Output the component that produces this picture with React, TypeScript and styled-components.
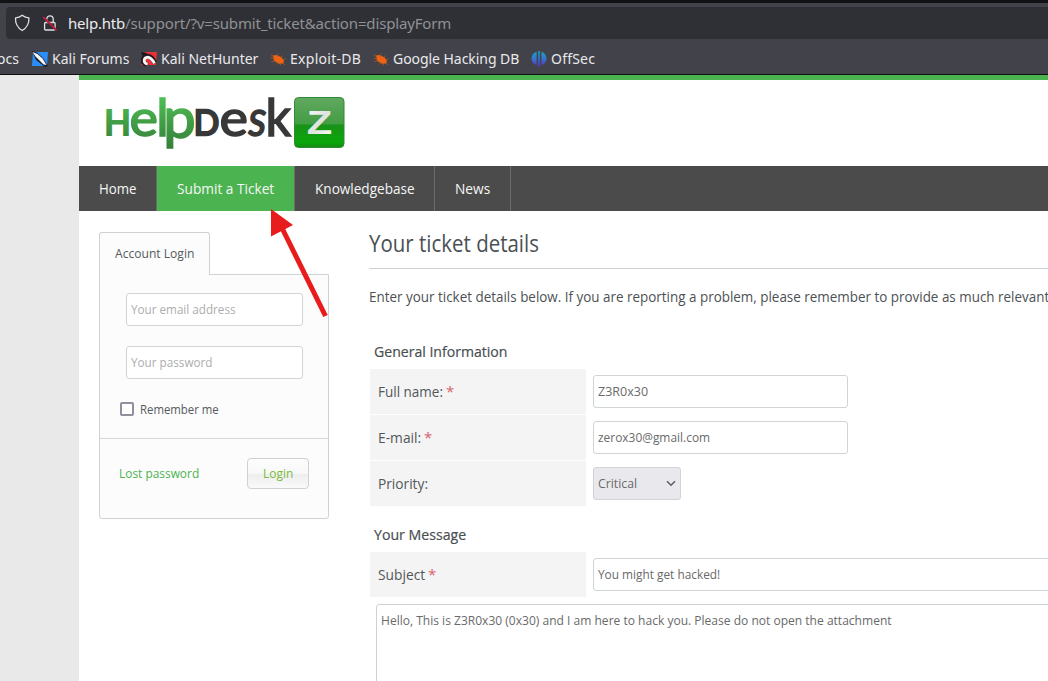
import React from "react";
import styled, { createGlobalStyle } from "styled-components";

const GlobalStyle = createGlobalStyle`
  * { box-sizing: border-box; }
  body { margin: 0; background: #fff; overflow: hidden; font-family: "Open Sans", sans-serif; }
`;

const Screen = styled.div`
  position: relative;
  width: 1048px;
  height: 681px;
  overflow: hidden;
  display: flex;
  flex-direction: column;
`;

/* Condensed text: glyphs are narrowed by $scale and take up $width in the layout. */
const Label = styled.span<{ $width: number; $scale?: number }>`
  display: inline-block;
  flex: none;
  width: ${(p) => p.$width}px;
  padding-bottom: 2px;
  transform: scaleX(${(p) => p.$scale ?? 0.9});
  transform-origin: 0 50%;
  white-space: nowrap;
`;

/* ---------- browser chrome ---------- */

const Chrome = styled.div`
  flex: none;
  height: 75px;
  border-top: 3px solid #111215;
  border-bottom: 1px solid #0d0e12;
  background: #42434a;
  font-family: "Noto Sans", sans-serif;
`;

const AddressBar = styled.div`
  display: flex;
  align-items: center;
  height: 32px;
  margin: 4px 0 0 6px;
  padding-left: 8px;
  border-radius: 4px 0 0 4px;
  background: #2f3035;
`;

const LockIcon = styled.svg`
  margin: 0 10px 0 11px;
`;

const Url = styled.div`
  display: flex;
  font-size: 15px;
  color: #909196;
  white-space: nowrap;
`;

const Host = styled.span`
  color: #ececee;
  letter-spacing: -0.22px;
`;

const Path = styled.span`
  letter-spacing: -0.15px;
`;

const Bookmarks = styled.div`
  display: flex;
  align-items: center;
  height: 35px;
  padding-top: 4px;
  font-size: 14px;
  color: #e9e9ec;
`;

const Bookmark = styled.div<{ $width: number; $spacing?: number; $gap?: number }>`
  display: flex;
  align-items: center;
  flex: none;
  gap: ${(p) => p.$gap ?? 4}px;
  width: ${(p) => p.$width}px;
  letter-spacing: ${(p) => p.$spacing ?? 0}px;
  white-space: nowrap;
`;

const ClippedBookmark = styled(Bookmark)`
  justify-content: flex-end;
  padding-right: 13px;
`;

/* ---------- page ---------- */

const Page = styled.div`
  flex: 1;
  display: flex;
  min-height: 0;
`;

const Gutter = styled.div`
  flex: none;
  width: 79px;
  background: #e9e9e9;
`;

const Site = styled.div`
  flex: 1;
  min-width: 0;
  border-top: 5px solid #4bb350;
  background: #fff;
`;

const Header = styled.header`
  height: 86px;
  padding: 12px 0 0 25px;
`;

const Nav = styled.nav`
  display: flex;
  height: 45px;
  background: #4b4b4b;
`;

const NavItem = styled.div<{ $width: number; $active?: boolean }>`
  display: flex;
  align-items: center;
  width: ${(p) => p.$width}px;
  padding-left: 20px;
  border-right: 1px solid #6b6b6b;
  background: ${(p) => (p.$active ? "#4bb350" : "transparent")};
  color: #f6f6f6;
  font-size: 15px;
`;

const Content = styled.div`
  display: flex;
  gap: 40px;
  padding: 21px 0 0 20px;
`;

/* ---------- login box ---------- */

const Sidebar = styled.aside`
  flex: none;
  width: 230px;
  color: #555a5d;
  font-size: 13px;
`;

const Tab = styled.div`
  position: relative;
  z-index: 1;
  display: flex;
  align-items: center;
  width: 111px;
  height: 43px;
  padding-left: 15px;
  border: 1px solid #cdd3d5;
  border-bottom: 0;
  border-radius: 3px 3px 0 0;
  background: #fcfcfc;
`;

const LoginPanel = styled.div`
  height: 245px;
  margin-top: -1px;
  border: 1px solid #cdd3d5;
  border-radius: 0 0 3px 3px;
  background: #fcfcfc;
`;

const LoginFields = styled.div`
  height: 164px;
  padding: 18px 26px 0;
  border-bottom: 1px solid #d3d7d9;
`;

const Remember = styled.div`
  display: flex;
  align-items: center;
  gap: 6px;
  margin: 0 0 0 -6px;
  height: 20px;

  ${Label} {
    padding-bottom: 0;
  }
`;

const Checkbox = styled.span`
  width: 14px;
  height: 14px;
  border: 2px solid #8f8f9d;
  border-radius: 2px;
  background: #fff;
`;

const LoginActions = styled.div`
  display: flex;
  align-items: center;
  justify-content: space-between;
  padding: 19px 19px 0;
  color: #4bb350;
`;

const Button = styled.div`
  display: flex;
  align-items: center;
  justify-content: center;
  width: 62px;
  height: 31px;
  border: 1px solid #cdd1d3;
  border-radius: 4px;
  background: linear-gradient(#fdfdfd 0%, #f8f8f8 50%, #ededed 51%, #fafafa 100%);
  color: #78b83c;
`;

/* ---------- form ---------- */

const Field = styled.div<{ $width: number; $muted?: boolean }>`
  display: flex;
  align-items: center;
  flex: none;
  width: ${(p) => p.$width}px;
  height: 33px;
  padding-left: 4px;
  border: 1px solid #cfd4d6;
  border-radius: 3px;
  background: #fff;
  color: ${(p) => (p.$muted ? "#adadad" : "#6a6a6a")};
  font-size: 13px;
`;

const LoginField = styled(Field)`
  margin-bottom: 20px;
`;

const Select = styled(Field)`
  justify-content: space-between;
  padding-right: 4px;
  background: #e9e9ed;
`;

const Main = styled.main`
  flex: 1;
  min-width: 0;
  color: #52575a;
  font-size: 15px;
`;

const Title = styled.h1`
  display: flex;
  align-items: center;
  height: 37px;
  margin: 0;
  padding-bottom: 13px;
  border-bottom: 1px solid #cdd3d5;
  font-size: 23px;
  font-weight: 400;
  line-height: 22px;
  color: #4a5054;
`;

const Intro = styled.p`
  height: 20px;
  margin: 17px 0 0;
  line-height: 20px;
  color: #4c5154;
`;

const SectionTitle = styled.h2<{ $gap: number }>`
  height: 20px;
  margin: ${(p) => p.$gap}px 0 8px 5px;
  font-size: 15px;
  font-weight: 400;
  -webkit-text-stroke: 0.2px currentColor;
  line-height: 20px;
  color: #484e52;
`;

const FormRow = styled.div`
  display: flex;
  align-items: center;
  gap: 7px;
  height: 45px;
  margin: 0 0 1px 1px;
`;

const FormLabel = styled.div`
  flex: none;
  display: flex;
  align-items: center;
  gap: 3px;
  width: 216px;
  height: 45px;
  padding-left: 8px;
  background: #f4f4f4;
`;

const Required = styled.span`
  padding-bottom: 2px;
  color: #d9626a;
`;

const MessageBox = styled.div`
  height: 140px;
  margin: 7px -10px 0 7px;
  padding: 5px 4px;
  border: 1px solid #cdd3d5;
  border-radius: 3px;
  color: #6a6a6a;
  font-size: 13px;
  line-height: 20px;
`;

const Pointer = styled.svg`
  position: absolute;
  left: 266px;
  top: 205px;
`;

function ShieldIcon() {
  return (
    <svg width="17" height="18" viewBox="0 0 17 18" fill="none" stroke="#dedee2" strokeWidth="1.3" strokeLinejoin="round">
      <path d="M8.2 1.2C6.4 2.7 3.9 3.7 1.5 3.9c-.3 5.6 1.5 9.6 6.7 12.6 5.2-3 7-7 6.7-12.6C12.5 3.7 10 2.7 8.2 1.2Z" />
    </svg>
  );
}

function InsecureIcon() {
  return (
    <LockIcon width="16" height="18" viewBox="0 0 16 18" fill="none">
      <rect x="2.6" y="8.5" width="10.5" height="7.5" rx="1" stroke="#dedee2" strokeWidth="1.3" />
      <path d="M4.8 8.5V5a3.2 3.2 0 0 1 6.4 0v3.5" stroke="#dedee2" strokeWidth="1.3" />
      <path d="M1.2 3 14.5 16.3" stroke="#2f3035" strokeWidth="2" />
      <path d="M1.2 3 14.5 16.3" stroke="#e5173f" strokeWidth="1.5" />
    </LockIcon>
  );
}

function ForumsIcon() {
  return (
    <svg width="17" height="16" viewBox="0 0 17 16">
      <path d="M1 1h15l-1 14H0Z" fill="#2b8df8" />
      <path d="M0 0l5 1.5 6 5.5 5 8-3 1-9-7Z" fill="#18202c" />
      <path d="M.5 1l5 2 5 4.5 4 6.5-3-.5-4-4-4-4Z" fill="#f4f5f6" />
    </svg>
  );
}

function NetHunterIcon() {
  return (
    <svg width="17" height="16" viewBox="0 0 17 16">
      <path d="M2 1h14l-1 13H0Z" fill="#e8303a" />
      <path d="M0 1l4 .5 4 2-4 3-2 6H0l2-6Z" fill="#171b21" />
      <path d="M6 13.5C.8 12 1.5 6.5 5.5 5.5c4.5-1 6.5 2.5 8.5 6.5" fill="none" stroke="#23191c" strokeWidth="4.6" />
      <path d="M6.5 13.2C2 12 2.3 7 6 6.3c3.5-.6 5.5 2.5 7.5 6" fill="none" stroke="#f5f5f5" strokeWidth="2.8" />
    </svg>
  );
}

function BugIcon() {
  return (
    <svg width="16" height="16" viewBox="0 0 16 16">
      <path d="M3 4.5 6 4l5 2 3 3.5-1 3-4 .3-5-3Z" fill="#ee6311" />
      <path d="M3.5 6 1 3m2.5 4.5L.5 7m4 3-3 .5m6-5L8 2.5m2.5 4 2.5-2m0 4 2.5-1M8 11.5l-2 2m4-1.5.5 2.5M13 12l2 2" stroke="#b85522" strokeWidth=".8" />
    </svg>
  );
}

function OffSecIcon() {
  return (
    <svg width="16" height="16" viewBox="0 0 16 16">
      <defs>
        <linearGradient id="offsec" gradientUnits="userSpaceOnUse" x1="0" y1="0" x2="0" y2="16">
          <stop offset="0" stopColor="#18a7c4" />
          <stop offset="0.5" stopColor="#3573cf" />
          <stop offset="1" stopColor="#5b2cc9" />
        </linearGradient>
      </defs>
      <path d="M5.6.7v13.4C2.500 13.3.5 11 .5 7.600S2.500 1.500 5.600.7ZM10.400.7v13.400c3.100-.8 5.100-3.100 5.100-6.500S13.500 1.500 10.400.7ZM7.200 0h1.600v16H7.200Z" fill="url(#offsec)" />
    </svg>
  );
}

function Logo() {
  return (
    <svg width="244" height="60" viewBox="104 92 244 60">
      <defs>
        <linearGradient id="leaf" gradientUnits="userSpaceOnUse" x1="0" y1="97" x2="0" y2="149">
          <stop offset="0" stopColor="#4fc055" />
          <stop offset="0.5" stopColor="#419c46" />
          <stop offset="1" stopColor="#358039" />
        </linearGradient>
        <linearGradient id="tile" x1="0" y1="0" x2="0" y2="1">
          <stop offset="0" stopColor="#62a862" />
          <stop offset="0.52" stopColor="#439d43" />
          <stop offset="0.56" stopColor="#179317" />
          <stop offset="0.9" stopColor="#0ba60b" />
          <stop offset="1" stopColor="#158a15" />
        </linearGradient>
        <linearGradient id="silver" x1="0" y1="0" x2="1" y2="1">
          <stop offset="0" stopColor="#ffffff" />
          <stop offset="0.5" stopColor="#dfe3df" />
          <stop offset="1" stopColor="#ffffff" />
        </linearGradient>
      </defs>
      <g fontFamily="Lato, sans-serif" fontSize="51" fill="url(#leaf)" stroke="url(#leaf)" strokeWidth="1.6">
        <text x="104.3" y="135.2" fontSize="34.5" strokeWidth="2.2" textLength="26.5" lengthAdjust="spacingAndGlyphs">H</text>
        <text x="129.5" y="135.5" textLength="28.5" lengthAdjust="spacingAndGlyphs">e</text>
        <text x="156.3" y="135.5" fontSize="53">l</text>
        <text x="163.3" y="138" fontSize="56" textLength="32.5" lengthAdjust="spacingAndGlyphs">p</text>
      </g>
      <g fontFamily="Lato, sans-serif" fontSize="51" fill="#383838" stroke="#383838" strokeWidth="1.6">
        <text x="193.8" y="135.2" fontSize="34.5" strokeWidth="2.4" textLength="25.5" lengthAdjust="spacingAndGlyphs">D</text>
        <text x="219.5" y="135.5" textLength="28.5" lengthAdjust="spacingAndGlyphs">e</text>
        <text x="248.5" y="135.5" fontStyle="italic" textLength="18" lengthAdjust="spacingAndGlyphs">s</text>
        <text x="265.5" y="135.5" fontSize="53" textLength="25.5" lengthAdjust="spacingAndGlyphs">k</text>
      </g>
      <rect x="294.5" y="97.5" width="49.5" height="50" rx="4" fill="url(#tile)" stroke="#2f8a33" />
      <text x="306.7" y="134" fontFamily="Liberation Sans, sans-serif" fontWeight="700" fontSize="33" textLength="25.5" lengthAdjust="spacingAndGlyphs" fill="url(#silver)">Z</text>
    </svg>
  );
}

export default function App() {
  return (
    <Screen>
      <GlobalStyle />
      <Chrome>
        <AddressBar>
          <ShieldIcon />
          <InsecureIcon />
          <Url>
            <Host>help.htb</Host>
            <Path>/support/?v=submit_ticket&amp;action=displayForm</Path>
          </Url>
        </AddressBar>
        <Bookmarks>
          <ClippedBookmark $width={32}>ocs</ClippedBookmark>
          <Bookmark $width={109} $gap={3}><ForumsIcon />Kali Forums</Bookmark>
          <Bookmark $width={129} $gap={3}><NetHunterIcon />Kali NetHunter</Bookmark>
          <Bookmark $width={103} $spacing={0.28}><BugIcon />Exploit-DB</Bookmark>
          <Bookmark $width={158} $spacing={-0.05}><BugIcon />Google Hacking DB</Bookmark>
          <Bookmark $width={70} $spacing={0.2}><OffSecIcon />OffSec</Bookmark>
        </Bookmarks>
      </Chrome>
      <Page>
        <Gutter />
        <Site>
          <Header><Logo /></Header>
          <Nav>
            <NavItem $width={78}><Label $width={37} $scale={0.885}>Home</Label></NavItem>
            <NavItem $width={138} $active><Label $width={97} $scale={0.912}>Submit a Ticket</Label></NavItem>
            <NavItem $width={140}><Label $width={99} $scale={0.905}>Knowledgebase</Label></NavItem>
            <NavItem $width={76}><Label $width={35} $scale={0.915}>News</Label></NavItem>
          </Nav>
          <Content>
            <Sidebar>
              <Tab><Label $width={79} $scale={0.93}>Account Login</Label></Tab>
              <LoginPanel>
                <LoginFields>
                  <LoginField $width={177} $muted><Label $width={104} $scale={0.898}>Your email address</Label></LoginField>
                  <LoginField $width={177} $muted><Label $width={81} $scale={0.9}>Your password</Label></LoginField>
                  <Remember><Checkbox /><Label $width={78} $scale={0.875}>Remember me</Label></Remember>
                </LoginFields>
                <LoginActions>
                  <Label $width={80} $scale={0.916}>Lost password</Label>
                  <Button><Label $width={30} $scale={0.92}>Login</Label></Button>
                </LoginActions>
              </LoginPanel>
            </Sidebar>
            <Main>
              <Title><Label $width={169} $scale={0.89}>Your ticket details</Label></Title>
              <Intro>
                <Label $width={679} $scale={0.895}>Enter your ticket details below. If you are reporting a problem, please remember to provide as much relevant</Label>
              </Intro>
              <SectionTitle $gap={35}><Label $width={133} $scale={0.938}>General Information</Label></SectionTitle>
              <FormRow>
                <FormLabel><Label $width={65} $scale={0.9}>Full name:</Label><Required>*</Required></FormLabel>
                <Field $width={255}><Label $width={50} $scale={0.965}>Z3R0x30</Label></Field>
              </FormRow>
              <FormRow>
                <FormLabel><Label $width={43} $scale={0.92}>E-mail:</Label><Required>*</Required></FormLabel>
                <Field $width={255}><Label $width={112} $scale={0.917}>zerox30@gmail.com</Label></Field>
              </FormRow>
              <FormRow>
                <FormLabel><Label $width={50} $scale={0.914}>Priority:</Label></FormLabel>
                <Select $width={88}>
                  <Label $width={39} $scale={0.943}>Critical</Label>
                  <svg width="10" height="7" viewBox="0 0 10 7" fill="none" stroke="#5d5d62" strokeWidth="1.5">
                    <path d="M1 1.2 5 5.2 9 1.2" />
                  </svg>
                </Select>
              </FormRow>
              <SectionTitle $gap={18}><Label $width={92} $scale={0.943}>Your Message</Label></SectionTitle>
              <FormRow>
                <FormLabel><Label $width={47} $scale={0.918}>Subject</Label><Required>*</Required></FormLabel>
                <Field $width={480}><Label $width={122} $scale={0.911}>You might get hacked!</Label></Field>
              </FormRow>
              <MessageBox>
                <Label $width={510} $scale={0.926}>Hello, This is Z3R0x30 (0x30) and I am here to hack you. Please do not open the attachment</Label>
              </MessageBox>
            </Main>
          </Content>
        </Site>
      </Page>
      <Pointer width="66" height="116" viewBox="266 205 66 116">
        <path d="M282 228 325.5 316" stroke="#e81c1c" strokeWidth="5" />
        <path d="M271 209 293 225 271 236.5Z" fill="#e81c1c" />
      </Pointer>
    </Screen>
  );
}
